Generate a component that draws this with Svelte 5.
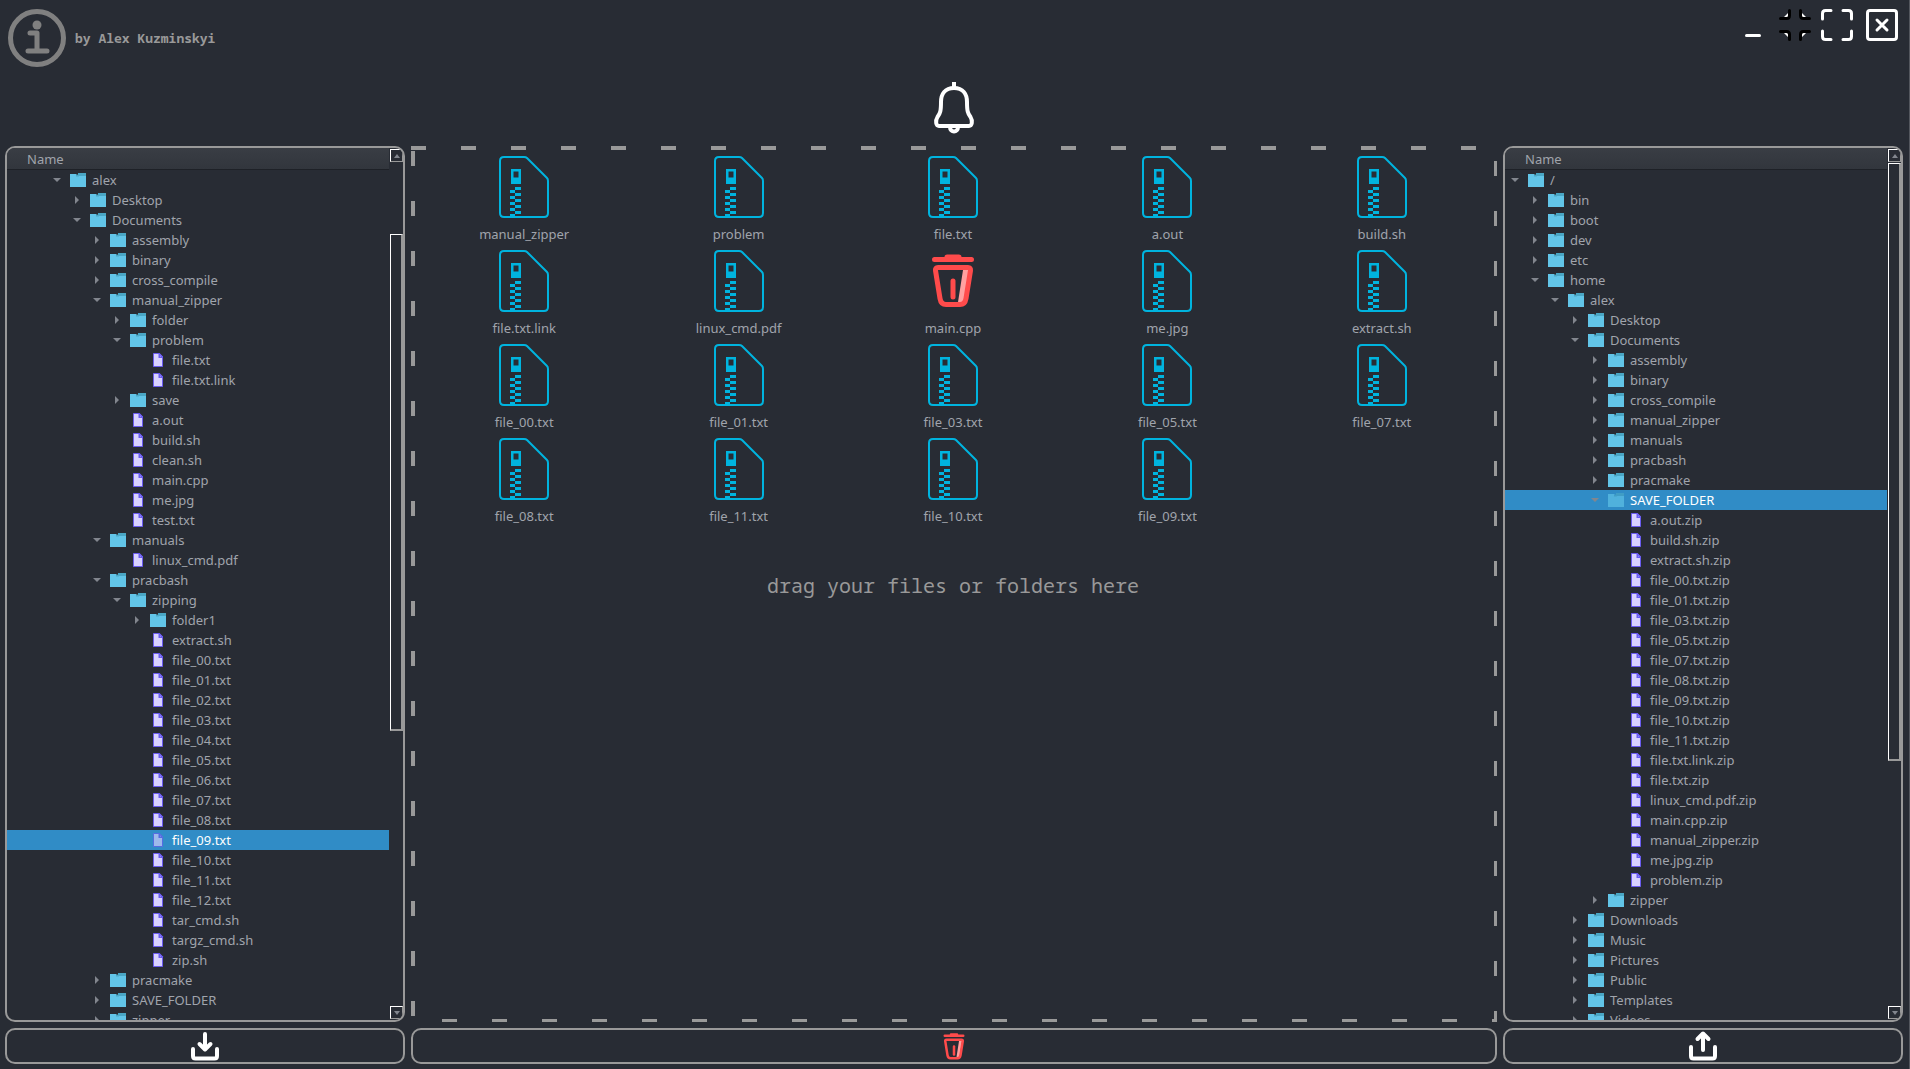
<script>
  // Each line: depth|kind|name, kind: o = open folder, c = closed folder, f = file
  const parse = (s) =>
    s.trim().split('\n').map((l) => {
      const [depth, kind, name] = l.trim().split('|');
      return { depth: +depth, kind, name };
    });

  const left = parse(`
    2|o|alex
    3|c|Desktop
    3|o|Documents
    4|c|assembly
    4|c|binary
    4|c|cross_compile
    4|o|manual_zipper
    5|c|folder
    5|o|problem
    6|f|file.txt
    6|f|file.txt.link
    5|c|save
    5|f|a.out
    5|f|build.sh
    5|f|clean.sh
    5|f|main.cpp
    5|f|me.jpg
    5|f|test.txt
    4|o|manuals
    5|f|linux_cmd.pdf
    4|o|pracbash
    5|o|zipping
    6|c|folder1
    6|f|extract.sh
    6|f|file_00.txt
    6|f|file_01.txt
    6|f|file_02.txt
    6|f|file_03.txt
    6|f|file_04.txt
    6|f|file_05.txt
    6|f|file_06.txt
    6|f|file_07.txt
    6|f|file_08.txt
    6|f|file_09.txt
    6|f|file_10.txt
    6|f|file_11.txt
    6|f|file_12.txt
    6|f|tar_cmd.sh
    6|f|targz_cmd.sh
    6|f|zip.sh
    4|c|pracmake
    4|c|SAVE_FOLDER
    4|c|zipper`);

  const right = parse(`
    0|o|/
    1|c|bin
    1|c|boot
    1|c|dev
    1|c|etc
    1|o|home
    2|o|alex
    3|c|Desktop
    3|o|Documents
    4|c|assembly
    4|c|binary
    4|c|cross_compile
    4|c|manual_zipper
    4|c|manuals
    4|c|pracbash
    4|c|pracmake
    4|o|SAVE_FOLDER
    5|f|a.out.zip
    5|f|build.sh.zip
    5|f|extract.sh.zip
    5|f|file_00.txt.zip
    5|f|file_01.txt.zip
    5|f|file_03.txt.zip
    5|f|file_05.txt.zip
    5|f|file_07.txt.zip
    5|f|file_08.txt.zip
    5|f|file_09.txt.zip
    5|f|file_10.txt.zip
    5|f|file_11.txt.zip
    5|f|file.txt.link.zip
    5|f|file.txt.zip
    5|f|linux_cmd.pdf.zip
    5|f|main.cpp.zip
    5|f|manual_zipper.zip
    5|f|me.jpg.zip
    5|f|problem.zip
    4|c|zipper
    3|c|Downloads
    3|c|Music
    3|c|Pictures
    3|c|Public
    3|c|Templates
    3|c|Videos`);

  const items = [
    'manual_zipper', 'problem', 'file.txt', 'a.out', 'build.sh',
    'file.txt.link', 'linux_cmd.pdf', 'main.cpp', 'me.jpg', 'extract.sh',
    'file_00.txt', 'file_01.txt', 'file_03.txt', 'file_05.txt', 'file_07.txt',
    'file_08.txt', 'file_11.txt', 'file_10.txt', 'file_09.txt'
  ];

  let selectedLeft = $state('file_09.txt');
  let selectedRight = $state('SAVE_FOLDER');
  let hovered = $state('main.cpp');
</script>

{#snippet trash(size)}
  <svg class={size} viewBox="0 0 44 54" aria-hidden="true">
    <path d="M32 16h6l-5 32h-6z" fill="#ffa0a0" />
    <path d="M3.500 5.500h37M16 3h12" fill="none" stroke="#ff4b4b" stroke-width="5" stroke-linecap="round" />
    <path d="M7 13.500h30q3 0 2.500 3l-4.500 28q-1 6-6 6h-14q-5 0-6-6l-4.500-28q-.5-3 2.500-3z" fill="none" stroke="#ff4b4b" stroke-width="5" />
    <path d="M22 27v16" stroke="#ff4b4b" stroke-width="5" stroke-linecap="round" />
  </svg>
{/snippet}

{#snippet tree(rows, selected, pick, thumb)}
  <section class="panel">
    <div class="list">
      <div class="head">Name</div>
      <ul>
        {#each rows as row}
          <li>
            <button class="row" class:selected={row.name === selected} style:--depth={row.depth} onclick={() => pick(row.name)}>
              <svg class="arrow" viewBox="0 0 8 8" aria-hidden="true">
                {#if row.kind === 'o'}<path d="M0 2h8L4 6z" />{:else if row.kind === 'c'}<path d="M2 0v8l4-4z" />{/if}
              </svg>
              <svg class="icon" viewBox="0 0 16 14" aria-hidden="true">
                {#if row.kind === 'f'}
                  <path d="M3.500.5h6l3 3v10h-9z" fill="#d9d2ff" stroke="#6a5cf0" />
                  <path d="M8.500 0v5h4.500v-1.500L9.500 0z" fill="#6a5cf0" />
                  <path d="M10 2.500v1h1z" fill="#d9d2ff" />
                {:else}
                  <path d="M5 4V2.500L8 2V0h8v5H5z" fill="#4aa7c5" />
                  <path d="M0 1h6.500v2H16v11H0z" fill="#62c5e8" />
                  <path d="M6 3.500h2.500L10.500 2H16V0H8v1.500L6 2z" fill="#4aa7c5" />
                {/if}
              </svg>
              <span>{row.name}</span>
            </button>
          </li>
        {/each}
      </ul>
    </div>
    <div class="scroll">
      <button class="step" aria-label="Scroll up"><svg viewBox="0 0 6 4"><path d="M0 4h6L3 0z" /></svg></button>
      <div class="track"><div class="thumb {thumb}"></div></div>
      <button class="step" aria-label="Scroll down"><svg viewBox="0 0 6 4"><path d="M0 0h6L3 4z" /></svg></button>
    </div>
  </section>
{/snippet}

<div class="window">
  <header>
    <div class="about">
      <svg class="info" viewBox="0 0 58 58" role="img" aria-label="About">
        <circle cx="29" cy="29" r="26.500" fill="none" stroke="#808080" stroke-width="5" />
        <circle cx="29" cy="16" r="4.500" fill="#808080" />
        <path d="M22 24h7v18M20 42h19" fill="none" stroke="#808080" stroke-width="5" stroke-linecap="round" stroke-linejoin="round" />
      </svg>
      <span>by Alex Kuzminskyi</span>
    </div>
    <nav>
      <button aria-label="Minimize">
        <svg viewBox="0 0 32 32"><path d="M9.500 26.500h13" stroke="#fff" stroke-width="3" stroke-linecap="round" /></svg>
      </button>
      <button aria-label="Restore">
        <svg viewBox="0 0 32 32">
          <path d="M5 8l5-5v5zM27 8l-5-5v5zM5 24l5 5v-5zM27 24l-5 5v-5z" fill="#fff" />
          <path d="M1.500 9.500h6q3 0 3-3v-5M30.500 9.500h-6q-3 0-3-3v-5M1.500 22.500h6q3 0 3 3v5M30.500 22.500h-6q-3 0-3 3v5" fill="none" stroke="#000" stroke-width="3" stroke-linecap="round" />
        </svg>
      </button>
      <button aria-label="Maximize">
        <svg viewBox="0 0 32 32"><path d="M1.500 10V4.500q0-3 3-3H10M22 1.500h5.500q3 0 3 3V10M30.500 22v5.500q0 3-3 3H22M10 30.500H4.500q-3 0-3-3V22" fill="none" stroke="#fff" stroke-width="3" stroke-linecap="round" /></svg>
      </button>
      <button class="close" aria-label="Close">
        <svg viewBox="0 0 32 32"><rect x="1.500" y="1.500" width="29" height="29" rx="2.500" fill="none" stroke="#fff" stroke-width="3" /><path d="M11 11l10 10M21 11L11 21" stroke="#fff" stroke-width="3" stroke-linecap="round" /></svg>
      </button>
    </nav>
  </header>

  <div class="notice">
    <button aria-label="Notifications">
      <svg viewBox="0 0 40 52">
        <path d="M20 0v7" stroke="#fff" stroke-width="4" />
        <path d="M20 6C11 6 7 12 7 20c0 10-1 11-3.500 15C1 39 2 44 5 44h30c3 0 4-5 1.500-9C34 31 33 30 33 20c0-8-4-14-13-14z" fill="none" stroke="#fff" stroke-width="4" />
        <path d="M16 45c0 6 8 6 8 0" fill="none" stroke="#fff" stroke-width="4" />
      </svg>
    </button>
  </div>

  <main>
    {@render tree(left, selectedLeft, (n) => (selectedLeft = n), 'middle')}

    <section class="drop">
      <div class="grid">
        {#each items as name}
          <button class="item" onclick={() => (hovered = name)}>
            {#if name === hovered}
              {@render trash('big')}
            {:else}
              <svg class="zip" viewBox="0 0 50 62" aria-hidden="true">
                <path d="M5 1h20q2 0 3 1l20 20q1 1 1 3v32q0 4-4 4H5q-4 0-4-4V5q0-4 4-4z" fill="none" stroke="#00b4df" stroke-width="2" />
                <path d="M12 13h10v15H12zM14.500 15.500v6h5v-6z" fill="#00b4df" fill-rule="evenodd" />
                <path d="M16 31h6v3h-6zM11 34h5v3h-5zM16 37h6v3h-6zM11 40h5v3h-5zM16 43h6v3h-6zM11 46h5v3h-5zM16 49h6v3h-6zM11 52h5v3h-5zM16 55h6v3h-6zM11 58h5v3h-5z" fill="#00b4df" />
              </svg>
            {/if}
            <span>{name}</span>
          </button>
        {/each}
      </div>
      <p>drag your files or folders here</p>
    </section>

    {@render tree(right, selectedRight, (n) => (selectedRight = n), 'top')}

    <button class="action" aria-label="Add files">
      <svg class="move" viewBox="0 0 30 30">
        <path d="M3 18v7q0 2.500 2.500 2.500h19q2.500 0 2.500-2.500v-7" fill="none" stroke="#fff" stroke-width="4" stroke-linecap="round" />
        <path d="M15 3v14M9.500 13l5.500 5.500 5.500-5.500" fill="none" stroke="#fff" stroke-width="4" stroke-linecap="round" stroke-linejoin="round" />
      </svg>
    </button>
    <button class="action" aria-label="Remove files">{@render trash('small')}</button>
    <button class="action" aria-label="Save archives">
      <svg class="move" viewBox="0 0 30 30">
        <path d="M3 16v9q0 2.500 2.500 2.500h19q2.500 0 2.500-2.500v-9" fill="none" stroke="#fff" stroke-width="4" stroke-linecap="round" />
        <path d="M15 19V4M9.500 8L15 2.500 20.500 8" fill="none" stroke="#fff" stroke-width="4" stroke-linecap="round" stroke-linejoin="round" />
      </svg>
    </button>
  </main>
</div>

<style>
  :global(body) { background: #282c34; }
  * { box-sizing: border-box; }
  button {
    padding: 0;
    border: 0;
    background: none;
    color: inherit;
    font: inherit;
    cursor: pointer;
  }
  svg { display: block; flex: none; overflow: visible; }
  .window {
    display: flex;
    flex-direction: column;
    height: 100vh;
    overflow: hidden;
    padding: 9px 6px 5px 5px;
    border-right: 1px solid #54575e;
    background: #282c34;
    color: #a0a4ac;
    font: 13px/20px "Noto Sans", sans-serif;
  }
  header { display: flex; justify-content: space-between; align-items: flex-start; }
  .about {
    display: flex;
    align-items: center;
    gap: 9px;
    padding-left: 3px;
    color: #999;
    font: bold 13px/20px "Noto Sans Mono", "DejaVu Sans Mono", monospace;
  }
  .info { width: 58px; height: 58px; }
  nav { display: flex; gap: 10px; padding-right: 5px; }
  nav button, nav svg { width: 32px; height: 32px; }
  nav .close { margin-left: 3px; }
  .notice { display: flex; justify-content: center; height: 79px; padding-top: 15px; }
  .notice button { height: 52px; }
  .notice svg { width: 40px; height: 52px; }
  main {
    flex: 1;
    min-height: 0;
    display: grid;
    grid-template-columns: 400px minmax(0, 1fr) 400px;
    grid-template-rows: minmax(0, 1fr) 36px;
    gap: 6px;
  }
  .panel {
    display: flex;
    min-height: 0;
    overflow: hidden;
    border: 2px solid #999;
    border-radius: 10px;
  }
  .list { flex: 1; min-width: 0; overflow: hidden; }
  .head {
    height: 22px;
    padding-left: 20px;
    border-bottom: 1px solid #1e2127;
    background: linear-gradient(#393d44, #32363d);
    line-height: 22px;
  }
  ul { margin: 0; padding: 0; list-style: none; }
  .row {
    display: flex;
    align-items: center;
    width: 100%;
    height: 20px;
    padding-left: calc(var(--depth) * 20px + 6px);
    text-align: left;
  }
  .row span { white-space: nowrap; }
  .selected { background: #308cc6; color: #fff; }
  .selected .icon { opacity: .65; }
  .arrow { width: 8px; height: 8px; margin-right: 9px; fill: #82868e; }
  .icon { width: 16px; height: 14px; margin-right: 6px; }
  .scroll { display: flex; flex-direction: column; width: 14px; padding: 1px 0 1px 1px; }
  .step {
    display: grid;
    place-items: center;
    width: 13px;
    height: 13px;
    border: 1px solid #fff;
    border-right-color: #999;
    border-bottom-color: #999;
  }
  .step svg { width: 6px; height: 4px; fill: #82868e; }
  .track { flex: 1; padding: 1px 0; }
  .thumb {
    border: 1px solid #fff;
    border-right: 2px solid #999;
    border-bottom: 2px solid #999;
  }
  .middle { height: 59%; margin-top: 71px; }
  .top { height: 71%; }
  .drop {
    min-height: 0;
    padding: 10px 8px 0 6px;
    background:
      linear-gradient(90deg, #999 0 15px, transparent 15px) 0 0 / 50px 4px repeat-x,
      linear-gradient(#999 0 15px, transparent 15px) 0 5px / 4px 50px repeat-y,
      linear-gradient(#999 0 15px, transparent 15px) 100% 15px / 3px 50px repeat-y,
      linear-gradient(90deg, #999 0 15px, transparent 15px) 31px 100% / 50px 3px repeat-x;
  }
  .grid { display: grid; grid-template-columns: repeat(5, minmax(0, 1fr)); }
  .item { display: flex; flex-direction: column; align-items: center; height: 94px; }
  .zip { width: 50px; height: 62px; margin-bottom: 6px; }
  .big { width: 44px; height: 54px; margin: 4px 0 10px; }
  .small { width: 22px; height: 27px; }
  .move { width: 30px; height: 30px; }
  p {
    margin: 42px 0 0;
    color: #999;
    font: 20px/24px "Noto Sans Mono", "DejaVu Sans Mono", monospace;
    text-align: center;
  }
  .action {
    display: grid;
    place-items: center;
    border: 2px solid #999;
    border-radius: 10px;
  }
</style>
